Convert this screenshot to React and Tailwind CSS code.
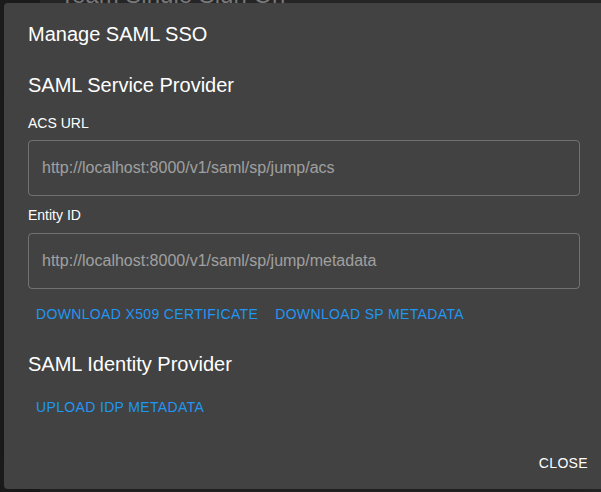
export default function App() {
  const sans = "font-['Liberation_Sans',Arial,sans-serif]";

  return (
    <div className={`relative h-[492px] w-[601px] overflow-hidden bg-[#262626] ${sans}`}>
      {/* page behind the dialog */}
      <div className="absolute inset-y-0 left-0 w-[40px] bg-[#1c1c1c]" />
      <div className="absolute left-[60px] top-[-17px] text-[24px] leading-none text-[#7a7a7a]">
        Team Single Sign On
      </div>

      {/* dialog */}
      <div className="absolute left-[4px] top-[3px] flex h-[486px] w-[600px] flex-col rounded-[4px] bg-[#424242] text-white shadow-2xl">
        <div className="px-6 pt-[15px]">
          <h2 className="text-[20px] leading-[32px]">Manage SAML SSO</h2>

          <h3 className="mt-[19px] text-[20px] leading-[32px]">SAML Service Provider</h3>

          <div className="mt-[12px] text-[14px] leading-[20px]">ACS URL</div>
          <div className="mt-[7px] flex h-[56px] items-center rounded-[4px] border border-white/25 px-[13px] text-[16px] text-white/50">
            http://localhost:8000/v1/saml/sp/jump/acs
          </div>

          <div className="mt-[9px] text-[14px] leading-[20px]">Entity ID</div>
          <div className="mt-[8px] flex h-[56px] items-center rounded-[4px] border border-white/25 px-[13px] text-[16px] text-white/50">
            http://localhost:8000/v1/saml/sp/jump/metadata
          </div>

          <div className="mt-[7px] flex gap-[1px]">
            <button className="rounded px-2 py-[6px] text-[14px] leading-[24.5px] tracking-[0.35px] text-[#2196f3]">
              DOWNLOAD X509 CERTIFICATE
            </button>
            <button className="rounded px-2 py-[6px] text-[14px] leading-[24.5px] tracking-[0.35px] text-[#2196f3]">
              DOWNLOAD SP METADATA
            </button>
          </div>

          <h3 className="mt-[15px] text-[20px] leading-[32px]">SAML Identity Provider</h3>

          <div className="mt-[9px] flex">
            <button className="rounded px-2 py-[6px] text-[14px] leading-[24.5px] tracking-[0.35px] text-[#2196f3]">
              UPLOAD IDP METADATA
            </button>
          </div>
        </div>

        <div className="mt-auto flex justify-end p-2">
          <button className="rounded px-2 py-[6px] text-[14px] leading-[24.5px] tracking-[0.35px] text-white">
            CLOSE
          </button>
        </div>
      </div>
    </div>
  );
}
